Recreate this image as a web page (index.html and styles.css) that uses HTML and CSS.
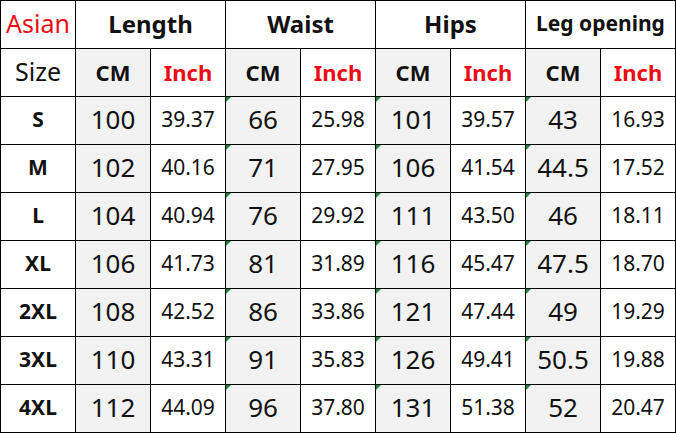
FILE: index.html
```html
<!DOCTYPE html>
<html>
<head>
<meta charset="utf-8">
<link rel="stylesheet" href="styles.css">
</head>
<body>
<div class="chart">
  <div class="cell title red">Asian</div>
  <div class="cell head span2">Length</div>
  <div class="cell head span2">Waist</div>
  <div class="cell head span2">Hips</div>
  <div class="cell head span2 small">Leg opening</div>

  <div class="cell title">Size</div>
  <div class="cell unit grey">CM</div><div class="cell unit red">Inch</div>
  <div class="cell unit grey">CM</div><div class="cell unit red">Inch</div>
  <div class="cell unit grey">CM</div><div class="cell unit red">Inch</div>
  <div class="cell unit grey">CM</div><div class="cell unit red">Inch</div>

  <div class="cell size">S</div>
  <div class="cell cm grey">100</div><div class="cell in">39.37</div>
  <div class="cell cm grey mark">66</div><div class="cell in">25.98</div>
  <div class="cell cm grey mark">101</div><div class="cell in">39.57</div>
  <div class="cell cm grey mark">43</div><div class="cell in">16.93</div>

  <div class="cell size">M</div>
  <div class="cell cm grey">102</div><div class="cell in">40.16</div>
  <div class="cell cm grey mark">71</div><div class="cell in">27.95</div>
  <div class="cell cm grey mark">106</div><div class="cell in">41.54</div>
  <div class="cell cm grey mark">44.5</div><div class="cell in">17.52</div>

  <div class="cell size">L</div>
  <div class="cell cm grey">104</div><div class="cell in">40.94</div>
  <div class="cell cm grey mark">76</div><div class="cell in">29.92</div>
  <div class="cell cm grey mark">111</div><div class="cell in">43.50</div>
  <div class="cell cm grey mark">46</div><div class="cell in">18.11</div>

  <div class="cell size">XL</div>
  <div class="cell cm grey">106</div><div class="cell in">41.73</div>
  <div class="cell cm grey mark">81</div><div class="cell in">31.89</div>
  <div class="cell cm grey mark">116</div><div class="cell in">45.47</div>
  <div class="cell cm grey mark">47.5</div><div class="cell in">18.70</div>

  <div class="cell size">2XL</div>
  <div class="cell cm grey">108</div><div class="cell in">42.52</div>
  <div class="cell cm grey mark">86</div><div class="cell in">33.86</div>
  <div class="cell cm grey mark">121</div><div class="cell in">47.44</div>
  <div class="cell cm grey mark">49</div><div class="cell in">19.29</div>

  <div class="cell size">3XL</div>
  <div class="cell cm grey">110</div><div class="cell in">43.31</div>
  <div class="cell cm grey mark">91</div><div class="cell in">35.83</div>
  <div class="cell cm grey mark">126</div><div class="cell in">49.41</div>
  <div class="cell cm grey mark">50.5</div><div class="cell in">19.88</div>

  <div class="cell size">4XL</div>
  <div class="cell cm grey">112</div><div class="cell in">44.09</div>
  <div class="cell cm grey mark">96</div><div class="cell in">37.80</div>
  <div class="cell cm grey mark">131</div><div class="cell in">51.38</div>
  <div class="cell cm grey mark">52</div><div class="cell in">20.47</div>
</div>
</body>
</html>
```
FILE: styles.css
```css
html, body {
  margin: 0;
  padding: 0;
  background: #fff;
}
.chart {
  display: grid;
  grid-template-columns: repeat(9, 74px);
  grid-template-rows: repeat(9, 47px);
  gap: 1px;
  padding: 1px;
  background: #000;
  width: 674px;
  font-family: "Noto Sans", "Open Sans", sans-serif;
  color: #111;
}
.cell {
  position: relative;
  background: #fff;
  display: flex;
  align-items: center;
  justify-content: center;
  line-height: 1;
  padding-bottom: 2px;
}
.span2 { grid-column: span 2; }
.grey { background: #f2f2f2; }
.red { color: #ee0a14; }
.title {
  font-size: 25px;
  font-weight: 400;
}
.head {
  font-size: 24px;
  font-weight: 700;
}
.head.small {
  font-size: 21px;
}
.unit {
  font-size: 22px;
  font-weight: 700;
}
.size {
  font-size: 21px;
  font-weight: 700;
}
.cm {
  font-size: 26px;
  padding-bottom: 4px;
}
.in {
  font-size: 21px;
  padding-bottom: 3px;
}
.mark::before {
  content: "";
  position: absolute;
  left: 0;
  top: 0;
  border-top: 5px solid #1a8a2e;
  border-right: 5px solid transparent;
}
```
